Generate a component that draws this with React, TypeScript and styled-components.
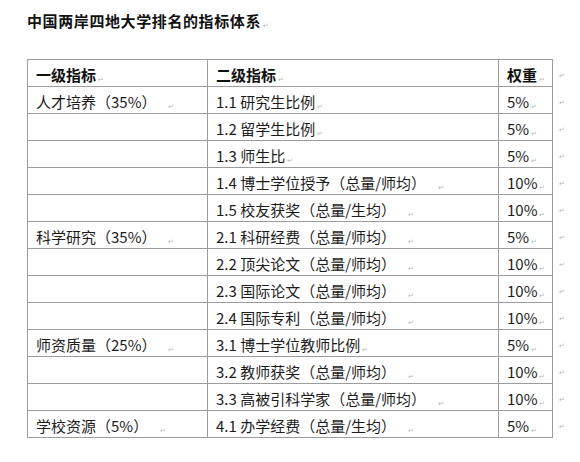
import React from "react";
import styled, { createGlobalStyle } from "styled-components";

const Global = createGlobalStyle`
  html, body { margin: 0; padding: 0; background: #ffffff; }
  body { font-family: "Noto Sans CJK SC", "Noto Sans", sans-serif; color: #1a1a1a; }
`;

const Page = styled.div`
  width: 580px;
  height: 462px;
  box-sizing: border-box;
  padding: 11px 0 0 27px;
  background: #fff;
`;

const Title = styled.h1`
  margin: 0 0 21px 0;
  height: 27px;
  line-height: 20px;
  font-size: 15px;
  font-weight: 700;
  color: #111;
  letter-spacing: 0.6px;
`;

const Mark = styled.span<{ $gap?: boolean }>`
  display: inline-block;
  font-size: 7px;
  line-height: 1;
  color: #b8b8b8;
  margin-left: ${(p) => (p.$gap ? "12px" : "2px")};
  vertical-align: -1px;
  font-weight: 400;
  letter-spacing: 0;
`;

const Table = styled.table`
  border-collapse: collapse;
  table-layout: fixed;
  font-size: 15px;
`;

const Cell = styled.td<{ $w: number; $head?: boolean }>`
  width: ${(p) => p.$w}px;
  height: 26px;
  box-sizing: border-box;
  padding: 3px 0 0 8px;
  border: 1px solid #9c9c9c;
  font-weight: ${(p) => (p.$head ? 700 : 400)};
  color: ${(p) => (p.$head ? "#111" : "#1c1c1c")};
  white-space: nowrap;
  line-height: 20px;
  vertical-align: middle;
`;

const RowEnd = styled.td`
  border: none;
  padding: 0 0 6px 4px;
  width: 20px;
  vertical-align: middle;
`;

type Row = { a: string; b: string; c: string; aGap?: boolean; bGap?: boolean };

const rows: Row[] = [
  { a: "人才培养（35%）", aGap: true, b: "1.1 研究生比例", c: "5%" },
  { a: "", b: "1.2 留学生比例", c: "5%" },
  { a: "", b: "1.3 师生比", c: "5%" },
  { a: "", b: "1.4 博士学位授予（总量/师均）", bGap: true, c: "10%" },
  { a: "", b: "1.5 校友获奖（总量/生均）", bGap: true, c: "10%" },
  { a: "科学研究（35%）", aGap: true, b: "2.1 科研经费（总量/师均）", bGap: true, c: "5%" },
  { a: "", b: "2.2 顶尖论文（总量/师均）", bGap: true, c: "10%" },
  { a: "", b: "2.3 国际论文（总量/师均）", bGap: true, c: "10%" },
  { a: "", b: "2.4 国际专利（总量/师均）", bGap: true, c: "10%" },
  { a: "师资质量（25%）", aGap: true, b: "3.1 博士学位教师比例", c: "5%" },
  { a: "", b: "3.2 教师获奖（总量/师均）", bGap: true, c: "10%" },
  { a: "", b: "3.3 高被引科学家（总量/师均）", bGap: true, c: "10%" },
  { a: "学校资源（5%）", aGap: true, b: "4.1 办学经费（总量/生均）", bGap: true, c: "5%" },
];

const P = "\u21B5";

export default function App() {
  return (
    <Page>
      <Global />
      <Title>
        中国两岸四地大学排名的指标体系<Mark>{P}</Mark>
      </Title>
      <Table>
        <tbody>
          <tr>
            <Cell $w={180} $head>
              一级指标<Mark>{P}</Mark>
            </Cell>
            <Cell $w={291} $head>
              二级指标<Mark>{P}</Mark>
            </Cell>
            <Cell $w={54} $head>
              权重<Mark>{P}</Mark>
            </Cell>
            <RowEnd>
              <Mark>{P}</Mark>
            </RowEnd>
          </tr>
          {rows.map((r, i) => (
            <tr key={i}>
              <Cell $w={180}>
                {r.a}
                {r.a && <Mark $gap={r.aGap}>{P}</Mark>}
              </Cell>
              <Cell $w={291}>
                {r.b}
                <Mark $gap={r.bGap}>{P}</Mark>
              </Cell>
              <Cell $w={54}>
                {r.c}
                <Mark>{P}</Mark>
              </Cell>
              <RowEnd>
                <Mark>{P}</Mark>
              </RowEnd>
            </tr>
          ))}
        </tbody>
      </Table>
    </Page>
  );
}
